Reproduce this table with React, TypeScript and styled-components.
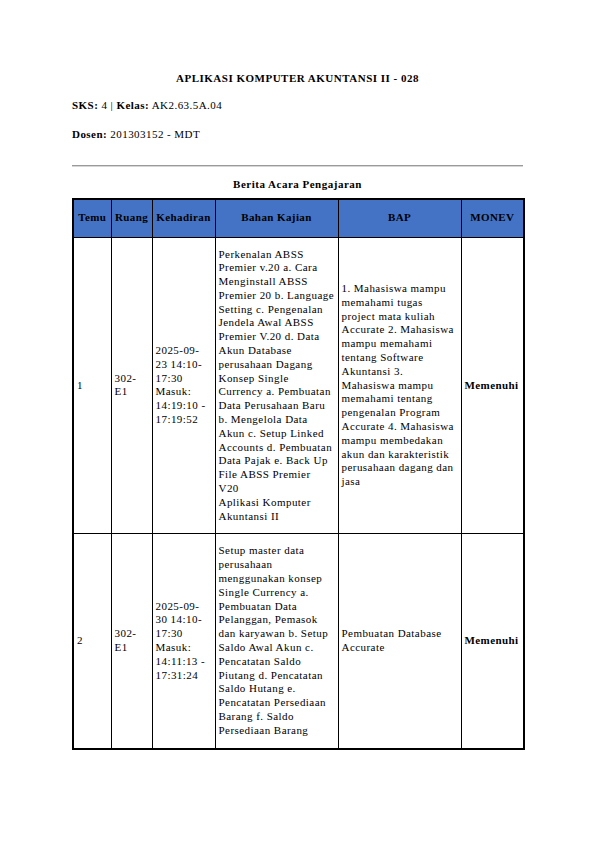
import React from "react";
import styled, { createGlobalStyle } from "styled-components";

const Global = createGlobalStyle`
  html, body { margin: 0; padding: 0; background: #ffffff; }
  body { font-family: "Liberation Serif", "Times New Roman", serif; color: #000; }
`;

const Page = styled.div`
  width: 595px;
  min-height: 842px;
  box-sizing: border-box;
  padding: 71px 72px 40px;
  font-size: 11px;
  letter-spacing: 0.45px;
  line-height: 13.8px;
`;

const Title = styled.h1`
  margin: 0;
  font-size: 11px;
  line-height: 14px;
  font-weight: bold;
  letter-spacing: 0.5px;
  text-align: center;
`;

const InfoLine = styled.p<{ $gap: number }>`
  margin: ${(p) => p.$gap}px 0 0;
  line-height: 14px;
  letter-spacing: 0.45px;
`;

const Rule = styled.hr`
  margin: 24px 0 0;
  border: 0;
  border-top: 1px solid #9a9a9a;
  border-bottom: 1px solid #d6d6d6;
  height: 0;
`;

const SectionTitle = styled.h2`
  margin: 10px 0 0;
  font-size: 11px;
  line-height: 14px;
  font-weight: bold;
  letter-spacing: 0.5px;
  text-align: center;
`;

const Table = styled.table`
  margin-top: 7px;
  width: 451px;
  border-collapse: collapse;
  table-layout: fixed;
  border: 2px solid #000;
`;

const HeadCell = styled.th`
  background: #4472c4;
  border: 1px solid #000;
  height: 38px;
  padding: 0 2px;
  font-weight: bold;
  letter-spacing: 0.4px;
  text-align: center;
  vertical-align: middle;
  box-sizing: border-box;
`;

const Cell = styled.td<{ $bold?: boolean }>`
  border: 1px solid #000;
  padding: 10px 3px;
  vertical-align: middle;
  text-align: left;
  font-weight: ${(p) => (p.$bold ? "bold" : "normal")};
  letter-spacing: ${(p) => (p.$bold ? "0.4px" : "0.45px")};
`;

const Line = styled.span`
  display: block;
  white-space: nowrap;
`;

const cols = [38, 41, 63, 123, 123, 63];

type Row = {
  temu: string[];
  ruang: string[];
  kehadiran: string[];
  bahan: string[];
  bap: string[];
  monev: string;
};

const rows: Row[] = [
  {
    temu: ["1"],
    ruang: ["302-", "E1"],
    kehadiran: ["2025-09-", "23 14:10-", "17:30", "Masuk:", "14:19:10 -", "17:19:52"],
    bahan: [
      "Perkenalan ABSS",
      "Premier v.20 a. Cara",
      "Menginstall ABSS",
      "Premier 20 b. Language",
      "Setting c. Pengenalan",
      "Jendela Awal ABSS",
      "Premier V.20 d. Data",
      "Akun Database",
      "perusahaan Dagang",
      "Konsep Single",
      "Currency a. Pembuatan",
      "Data Perusahaan Baru",
      "b. Mengelola Data",
      "Akun c. Setup Linked",
      "Accounts d. Pembuatan",
      "Data Pajak e. Back Up",
      "File ABSS Premier",
      "V20",
      "Aplikasi Komputer",
      "Akuntansi II",
    ],
    bap: [
      "1. Mahasiswa mampu",
      "memahami tugas",
      "project mata kuliah",
      "Accurate 2. Mahasiswa",
      "mampu memahami",
      "tentang Software",
      "Akuntansi 3.",
      "Mahasiswa mampu",
      "memahami tentang",
      "pengenalan Program",
      "Accurate 4. Mahasiswa",
      "mampu membedakan",
      "akun dan karakteristik",
      "perusahaan dagang dan",
      "jasa",
    ],
    monev: "Memenuhi",
  },
  {
    temu: ["2"],
    ruang: ["302-", "E1"],
    kehadiran: ["2025-09-", "30 14:10-", "17:30", "Masuk:", "14:11:13 -", "17:31:24"],
    bahan: [
      "Setup master data",
      "perusahaan",
      "menggunakan konsep",
      "Single Currency a.",
      "Pembuatan Data",
      "Pelanggan, Pemasok",
      "dan karyawan b. Setup",
      "Saldo Awal Akun c.",
      "Pencatatan Saldo",
      "Piutang d. Pencatatan",
      "Saldo Hutang e.",
      "Pencatatan Persediaan",
      "Barang f. Saldo",
      "Persediaan Barang",
    ],
    bap: ["Pembuatan Database", "Accurate"],
    monev: "Memenuhi",
  },
];

const headers = ["Temu", "Ruang", "Kehadiran", "Bahan Kajian", "BAP", "MONEV"];

function Lines({ items }: { items: string[] }) {
  return (
    <>
      {items.map((t, i) => (
        <Line key={i}>{t}</Line>
      ))}
    </>
  );
}

export default function App() {
  return (
    <>
      <Global />
      <Page>
        <Title>APLIKASI KOMPUTER AKUNTANSI II - 028</Title>
        <InfoLine $gap={13}>
          <b>SKS:</b> 4 | <b>Kelas:</b> AK2.63.5A.04
        </InfoLine>
        <InfoLine $gap={15}>
          <b>Dosen:</b> 201303152 - MDT
        </InfoLine>
        <Rule />
        <SectionTitle>Berita Acara Pengajaran</SectionTitle>
        <Table>
          <colgroup>
            {cols.map((w, i) => (
              <col key={i} style={{ width: w }} />
            ))}
          </colgroup>
          <thead>
            <tr>
              {headers.map((h) => (
                <HeadCell key={h}>{h}</HeadCell>
              ))}
            </tr>
          </thead>
          <tbody>
            {rows.map((r) => (
              <tr key={r.temu[0]}>
                <Cell>
                  <Lines items={r.temu} />
                </Cell>
                <Cell>
                  <Lines items={r.ruang} />
                </Cell>
                <Cell>
                  <Lines items={r.kehadiran} />
                </Cell>
                <Cell>
                  <Lines items={r.bahan} />
                </Cell>
                <Cell>
                  <Lines items={r.bap} />
                </Cell>
                <Cell $bold>{r.monev}</Cell>
              </tr>
            ))}
          </tbody>
        </Table>
      </Page>
    </>
  );
}
